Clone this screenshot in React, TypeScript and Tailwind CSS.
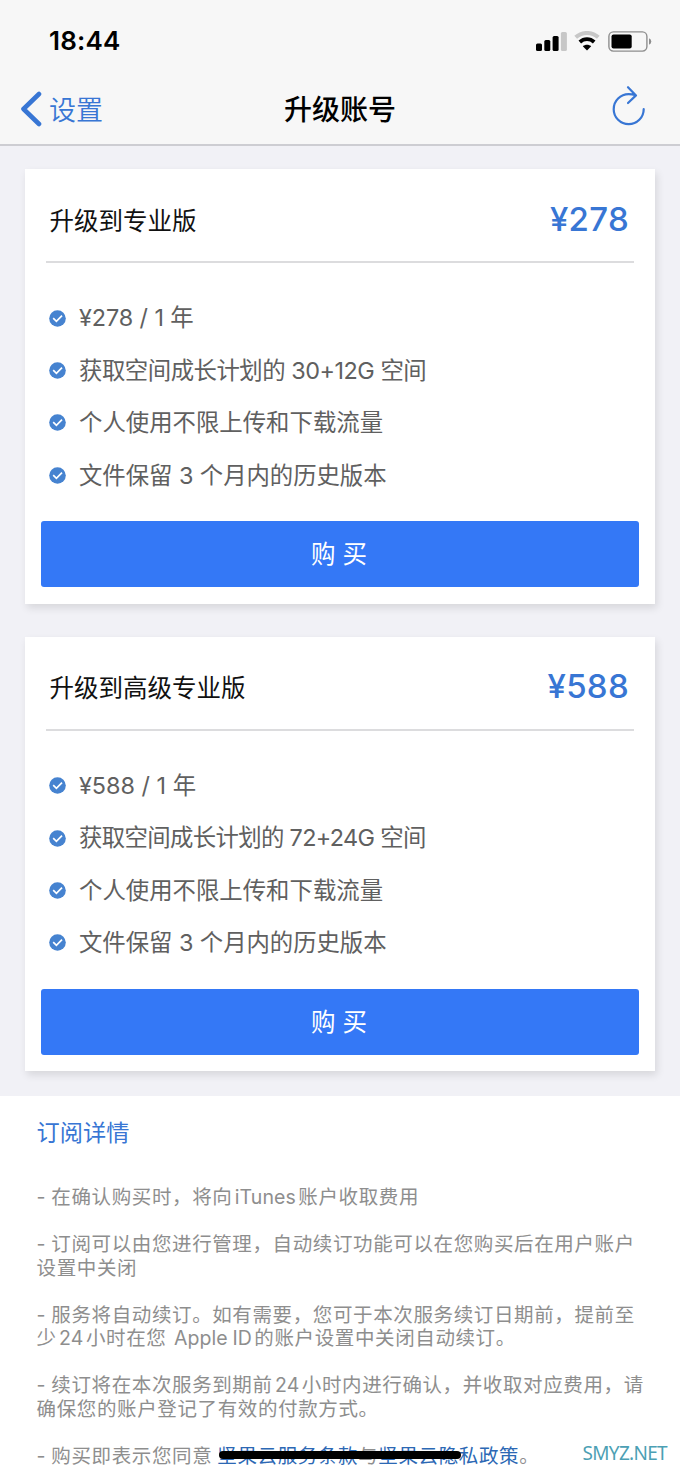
import type { ReactNode } from 'react'
import { clsx } from 'clsx'

type Plan = {
  title: string
  price: string
  features: { text: string; className?: string }[]
}

const plans: Plan[] = [
  {
    title: '升级到专业版',
    price: '¥278',
    features: [
      { text: '¥278 / 1 年', className: 'tracking-[-0.1px]' },
      { text: '获取空间成长计划的 30+12G 空间', className: 'tracking-[-0.48px]' },
      { text: '个人使用不限上传和下载流量' },
      { text: '文件保留 3 个月内的历史版本', className: 'tracking-[-0.05px]' },
    ],
  },
  {
    title: '升级到高级专业版',
    price: '¥588',
    features: [
      { text: '¥588 / 1 年' },
      { text: '获取空间成长计划的 72+24G 空间', className: 'tracking-[-0.65px]' },
      { text: '个人使用不限上传和下载流量' },
      { text: '文件保留 3 个月内的历史版本', className: 'tracking-[-0.05px]' },
    ],
  },
]

function StatusBar() {
  return (
    <div className="flex h-[82px] items-center justify-between pl-[49px] pr-[28px]">
      <span className="text-[26px] font-semibold leading-none tracking-[0.2px] text-black">18:44</span>
      <div className="flex items-center gap-[8px]">
        <svg width="31" height="20" viewBox="0 0 31 20" className="mr-[-1px]">
          <rect x="0" y="12.5" width="6" height="7.5" rx="1.5" />
          <rect x="8.3" y="9" width="6" height="11" rx="1.5" />
          <rect x="16.6" y="5" width="6" height="15" rx="1.5" />
          <rect x="24.9" y="1" width="6" height="19" rx="1.5" fill="#c7c7c7" />
        </svg>
        <svg width="26" height="20" viewBox="0 0 26 20" fill="none">
          <path d="M1.7 6.3C8 0.5 18 0.5 24.3 6.3" stroke="#c7c7c7" strokeWidth="4" />
          <path d="M5.8 11C10 7.2 16 7.2 20.2 11" stroke="#000" strokeWidth="3.8" />
          <path d="M8.8 15.2C11.2 13.2 14.8 13.2 17.2 15.2L13 19.6Z" fill="#000" />
        </svg>
        <svg width="44" height="21" viewBox="0 0 44 21" fill="none">
          <rect x="0.9" y="0.9" width="38" height="19.2" rx="4.5" stroke="#8e8e8e" strokeWidth="1.4" />
          <rect x="3.5" y="3.5" width="20.2" height="14" rx="2" fill="#000" />
          <path d="M41 7.3Q43.3 8.2 43.3 10.5T41 13.7Z" fill="#8e8e8e" />
        </svg>
      </div>
    </div>
  )
}

function NavBar() {
  return (
    <div className="grid h-[62px] grid-cols-[1fr_auto_1fr] items-center px-[20px] pb-[9px]">
      <div className="flex items-center gap-[7px] text-[#3876d4]">
        <svg width="22" height="36" viewBox="0 0 22 36" fill="none">
          <path d="M19 3L3.5 18L19 33" stroke="currentColor" strokeWidth="4.6" strokeLinecap="round" strokeLinejoin="round" />
        </svg>
        <span className="pt-[3px] text-[27px] font-[350] leading-none">设置</span>
      </div>
      <h1 className="pt-[3px] text-[28px] font-medium leading-none text-black">升级账号</h1>
      <svg className="mb-[6px] mr-[14px] justify-self-end" width="34" height="42" viewBox="0 0 34 42" fill="none">
        <path
          d="M31.7 24.2A15 15 0 1 1 16.7 9.2C19.5 9.2 21.5 9.6 23.5 10.2M16 2.2L24 10.4L16 18"
          stroke="#3876d4"
          strokeWidth="2.2"
          strokeLinecap="round"
          strokeLinejoin="round"
        />
      </svg>
    </div>
  )
}

function CheckIcon() {
  return (
    <svg width="17" height="17" viewBox="0 0 17 17" fill="none" className="shrink-0">
      <circle cx="8.5" cy="8.5" r="8.3" fill="#4683d0" />
      <path d="M4.2 8.2L7.4 11.3L13 5.7" stroke="#fff" strokeWidth="1.7" />
    </svg>
  )
}

function PlanCard({ plan }: { plan: Plan }) {
  return (
    <section className="h-[434.5px] bg-white px-[16px] shadow-[2px_4px_8px_rgba(0,0,0,0.11)]">
      <div className="mx-[5px] flex h-[94px] items-center justify-between border-b-2 border-[#dcdcde] pl-[3.5px] pr-[5px] pt-[8px]">
        <h2 className="pt-[4px] text-[24.5px] font-normal leading-none text-[#111]">{plan.title}</h2>
        <span className="text-[33px] font-[460] leading-none tracking-[0.3px] text-[#3876d4]">{plan.price}</span>
      </div>
      <ul className="pl-[8px] pt-[29px]">
        {plan.features.map(({ text, className }) => (
          <li key={text} className="flex h-[52.4px] items-center gap-[13px] text-[23.4px] font-[390] text-[#606060]">
            <CheckIcon />
            <span className={clsx('whitespace-nowrap leading-none', className)}>{text}</span>
          </li>
        ))}
      </ul>
      <button className="mt-[19.5px] h-[66px] w-full rounded-[3px] bg-[#3478f6] pr-[2px] pt-[1px] text-[24.5px] font-normal text-white">
        购 买
      </button>
    </section>
  )
}

function Note({ children }: { children: ReactNode }) {
  return <p className="whitespace-nowrap">{children}</p>
}

function Latin({ children }: { children: ReactNode }) {
  return <span className="mx-[2.4px] tracking-[0.1px]">{children}</span>
}

export default function App() {
  return (
    <div className="h-[1472px] w-[680px] overflow-hidden bg-[#f1f1f6] font-['Inter','Noto_Sans_CJK_SC',sans-serif]">
      <header className="h-[146px] border-b-2 border-[#cdcdd2] bg-[#f7f7f7]">
        <StatusBar />
        <NavBar />
      </header>

      <main>
        <div className="flex h-[950px] flex-col gap-[33px] px-[25px] pt-[23px]">
          {plans.map((plan) => (
            <PlanCard key={plan.title} plan={plan} />
          ))}
        </div>

        <section className="h-[376px] bg-white pl-[36.6px] pt-[24px]">
          <h2 className="text-[23.2px] font-[390] leading-[26px] text-[#3876d4]">订阅详情</h2>
          <div className="mt-[40px] flex flex-col gap-[23.6px] text-[19.5px] font-[390] leading-[23.5px] tracking-[0.62px] text-[#8e8e8e] [word-spacing:-1px]">
            <Note>
              - 在确认购买时，将向<Latin>iTunes</Latin>账户收取费用
            </Note>
            <Note>
              - 订阅可以由您进行管理，自动续订功能可以在您购买后在用户账户
              <br />
              设置中关闭
            </Note>
            <Note>
              - 服务将自动续订。如有需要，您可于本次服务续订日期前，提前至
              <br />
              少<Latin>24</Latin>小时在您 <Latin>Apple ID</Latin>的账户设置中关闭自动续订。
            </Note>
            <Note>
              - 续订将在本次服务到期前<Latin>24</Latin>小时内进行确认，并收取对应费用，请
              <br />
              确保您的账户登记了有效的付款方式。
            </Note>
            <div className="relative">
              <Note>
                - 购买即表示您同意{' '}
                <a className="text-[#2c68b4]">坚果云服务条款</a>与<a className="text-[#2c68b4]">坚果云隐私政策</a>。
              </Note>
              {/* home indicator */}
              <div className="absolute left-[182px] top-[6px] h-[8px] w-[242px] rounded-full bg-black" />
              <span className="absolute left-[546px] top-[-3px] font-['Noto_Sans',sans-serif] text-[19px] font-normal tracking-[-0.7px] text-[#4c9fb4]">
                SMYZ.NET
              </span>
            </div>
          </div>
        </section>
      </main>
    </div>
  )
}
